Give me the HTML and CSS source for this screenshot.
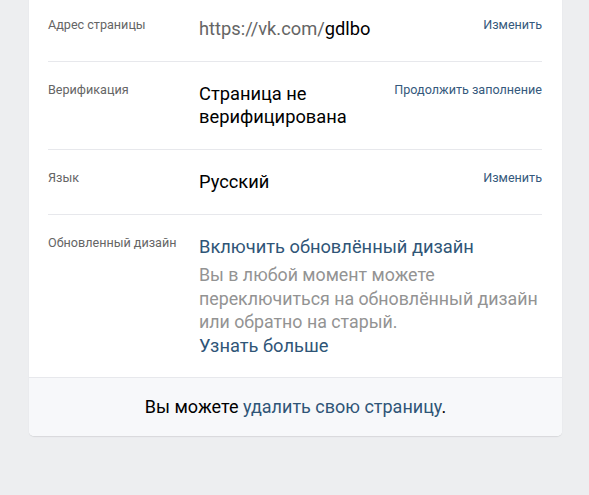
FILE: index.html
```html
<!DOCTYPE html>
<html lang="ru">
<head>
<meta charset="utf-8">
<link rel="stylesheet" href="styles.css">
</head>
<body>
<div class="page">
  <div class="card">
    <div class="rows">
      <div class="row">
        <div class="label">Адрес страницы</div>
        <div class="value"><span class="muted">https://vk.com/</span>gdlbo</div>
        <a class="action">Изменить</a>
      </div>
      <div class="row">
        <div class="label">Верификация</div>
        <div class="value">Страница не<br>верифицирована</div>
        <a class="action">Продолжить заполнение</a>
      </div>
      <div class="row">
        <div class="label">Язык</div>
        <div class="value">Русский</div>
        <a class="action">Изменить</a>
      </div>
      <div class="row last">
        <div class="label">Обновленный дизайн</div>
        <div class="value design">
          <a class="link head">Включить обновлённый дизайн</a>
          <div class="hint">Вы в любой момент можете переключиться на обновлённый дизайн или обратно на старый.</div>
          <a class="link">Узнать больше</a>
        </div>
      </div>
    </div>
    <div class="footer">Вы можете <a class="link">удалить свою страницу</a>.</div>
  </div>
</div>
</body>
</html>
```
FILE: styles.css
```css
html, body {
  margin: 0;
  padding: 0;
  background: #edeef0;
  font-family: Roboto, "Noto Sans", sans-serif;
}
.page {
  width: 589px;
  height: 495px;
  overflow: hidden;
}
.card {
  margin: -3px 27px 0 29px;
  background: #fff;
  border-radius: 0 0 5px 5px;
  box-shadow: 0 1px 1px #d7d8db;
}
.rows {
  padding: 0 20px 0 19px;
}
.row {
  display: grid;
  grid-template-columns: 151px 1fr auto;
  padding: 20px 0 21px;
  border-bottom: 1px solid #e7e8ec;
}
.row.last {
  border-bottom: none;
  padding-bottom: 20px;
}
.label {
  font-size: 12.6px;
  line-height: 16px;
  color: #656565;
}
.value {
  font-size: 18.3px;
  line-height: 23px;
  color: #000;
}
.muted {
  color: #656565;
}
.action {
  font-size: 12.6px;
  line-height: 16px;
  color: #35597c;
  white-space: nowrap;
}
.design {
  grid-column: 2 / 4;
  display: flex;
  flex-direction: column;
}
.link {
  color: #2f5577;
}
.head {
  line-height: 24px;
  margin-bottom: 4px;
}
.hint {
  color: #939393;
  font-size: 17.8px;
  line-height: 23.5px;
  width: 345px;
}
.footer {
  background: #f7f8fa;
  border-top: 1px solid #e7e8ec;
  border-radius: 0 0 5px 5px;
  text-align: center;
  font-size: 18px;
  line-height: 22px;
  padding: 18px 0 18px;
  color: #000;
}
```
